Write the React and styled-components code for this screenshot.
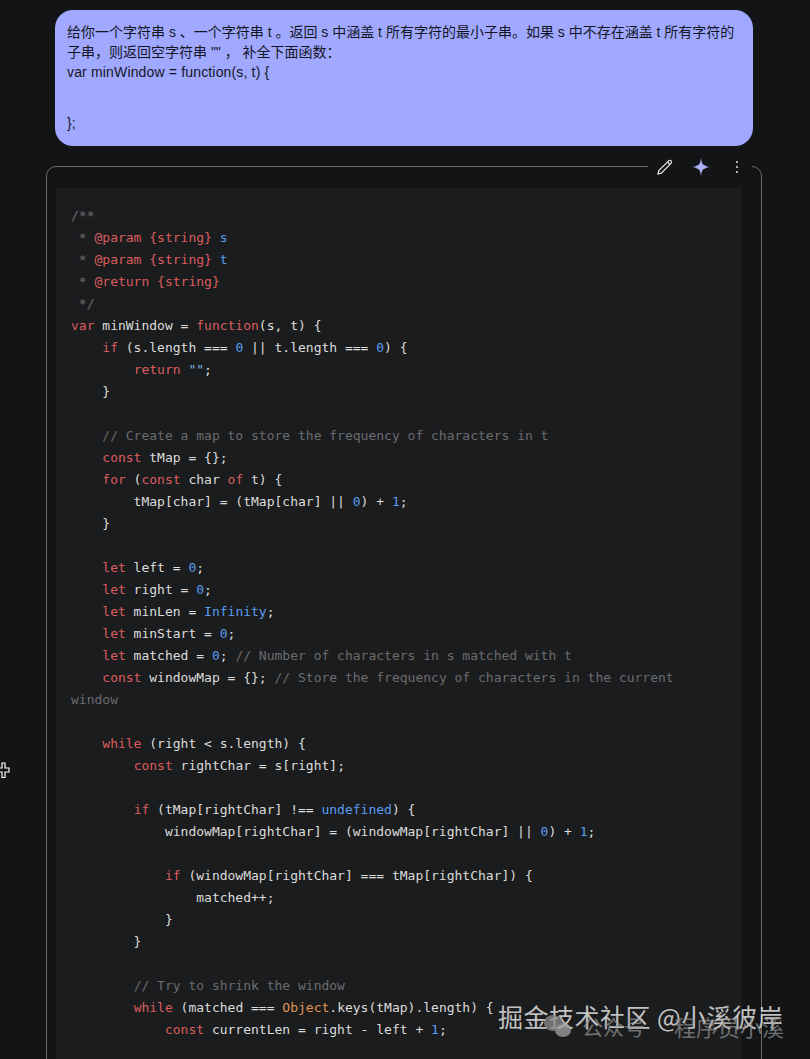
import React from 'react'
import styled, { createGlobalStyle } from 'styled-components'

const GlobalStyle = createGlobalStyle`
    html, body {
        margin: 0;
        padding: 0;
        background: #131416;
    }
`

const Page = styled.div`
    position: relative;
    width: 810px;
    height: 1059px;
    overflow: hidden;
    background: #131416;
    padding: 10px 48px 0 46px;
    box-sizing: border-box;
`
const Bubble = styled.div`
    margin-left: 9px;
    margin-right: 9px;
    height: 136px;
    box-sizing: border-box;
    padding: 12px 12px 0;
    background: #a0a8ff;
    border-radius: 18px;
    color: #14161f;
    font-family: "Liberation Sans", "Noto Sans CJK SC", sans-serif;
    font-size: 14px;
    line-height: 20px;
`
const BubbleCode = styled.div`
    letter-spacing: 0.16px;
`
const BubbleGap = styled.div`
    height: 31px;
`
const Card = styled.div`
    position: relative;
    margin-top: 20px;
    height: 940px;
    box-sizing: border-box;
    padding: 21px 19px 0 9px;
    border: 1px solid #66686a;
    border-radius: 10px;
`
const Toolbar = styled.div`
    position: absolute;
    top: -12px;
    right: 9px;
    width: 104px;
    height: 24px;
    display: flex;
    align-items: center;
    padding-left: 9px;
    box-sizing: border-box;
    background: #131416;
`
const ToolIcon = styled.svg`
    display: block;
    flex: none;
    margin-right: ${props => props.$gap}px;
`
const CodeBlock = styled.pre`
    margin: 0;
    height: 100%;
    box-sizing: border-box;
    padding: 17px 15px 0;
    background: #1b1c1e;
    color: #dcdcdc;
    font-family: "DejaVu Sans Mono", monospace;
    font-size: 13px;
    line-height: 22px;
`
const Line = styled.div`
    height: 22px;
    white-space: pre;
`
const colors = {
    comment: '#6a6c70',
    keyword: '#dc5d5e',
    value: '#5a9df0',
    string: '#7fb5e6',
    builtin: '#e0954f',
}
const Token = styled.span`
    color: ${props => colors[props.$kind]};
`
const Watermark = styled.div`
    position: absolute;
    left: 498px;
    top: 998px;
    display: flex;
    flex-direction: column;
    font-family: "Noto Sans CJK SC", sans-serif;
    white-space: nowrap;
`
const Brand = styled.div`
    height: 36px;
    font-size: 25px;
    line-height: 36px;
    letter-spacing: 0.5px;
    color: rgba(225, 225, 225, 0.85);
`
const Account = styled.div`
    display: flex;
    align-items: center;
    height: 28px;
    margin-top: -22px;
    padding-left: 45px;
    font-size: 21px;
    line-height: 28px;
    color: rgba(150, 150, 150, 0.7);
`
const AccountName = styled.span`
    margin-left: 29px;
    font-size: 22px;
`
const WechatIcon = styled.svg`
    flex: none;
    margin-right: 9px;
`
const Cursor = styled.svg`
    position: absolute;
    left: 0;
    top: 762px;
`

const code = [
    '/**',
    ' * @param {string} s',
    ' * @param {string} t',
    ' * @return {string}',
    ' */',
    'var minWindow = function(s, t) {',
    '    if (s.length === 0 || t.length === 0) {',
    '        return "";',
    '    }',
    '',
    '    // Create a map to store the frequency of characters in t',
    '    const tMap = {};',
    '    for (const char of t) {',
    '        tMap[char] = (tMap[char] || 0) + 1;',
    '    }',
    '',
    '    let left = 0;',
    '    let right = 0;',
    '    let minLen = Infinity;',
    '    let minStart = 0;',
    '    let matched = 0; // Number of characters in s matched with t',
    '    const windowMap = {}; // Store the frequency of characters in the current',
    'window',
    '',
    '    while (right < s.length) {',
    '        const rightChar = s[right];',
    '',
    '        if (tMap[rightChar] !== undefined) {',
    '            windowMap[rightChar] = (windowMap[rightChar] || 0) + 1;',
    '',
    '            if (windowMap[rightChar] === tMap[rightChar]) {',
    '                matched++;',
    '            }',
    '        }',
    '',
    '        // Try to shrink the window',
    '        while (matched === Object.keys(tMap).length) {',
    '            const currentLen = right - left + 1;',
]

const pattern = /\b(?:var|function|if|return|const|for|of|let|while)\b|\bObject\b|""|\b\d+\b|\b(?:Infinity|undefined)\b/g

const kindOf = (word) => {
    if (word === '""') return 'string'
    if (word === 'Object') return 'builtin'
    if (/^\d|Infinity|undefined/.test(word)) return 'value'
    return 'keyword'
}

// splits one line of code into coloured tokens
const highlight = (line, index) => {
    if (line === 'window') return <Token $kind="comment">{line}</Token>
    if (index < 5) {
        const doc = line.match(/^( \* )(@\w+ \{string\})( \w)?$/)
        if (!doc) return <Token $kind="comment">{line}</Token>
        return (
            <>
                <Token $kind="comment">{doc[1]}</Token>
                <Token $kind="keyword">{doc[2]}</Token>
                <Token $kind="value">{doc[3]}</Token>
            </>
        )
    }
    const slash = line.indexOf('//')
    const body = slash >= 0 ? line.slice(0, slash) : line
    const parts = []
    let last = 0
    for (const match of body.matchAll(pattern)) {
        parts.push(body.slice(last, match.index))
        parts.push(<Token key={match.index} $kind={kindOf(match[0])}>{match[0]}</Token>)
        last = match.index + match[0].length
    }
    parts.push(body.slice(last))
    if (slash >= 0) parts.push(<Token key="comment" $kind="comment">{line.slice(slash)}</Token>)
    return parts
}

const App = () => {
    return (
        <Page>
            <GlobalStyle />
            <Bubble>
                <div>给你一个字符串 s 、一个字符串 t 。返回 s 中涵盖 t 所有字符的最小子串。如果 s 中不存在涵盖 t 所有字符的</div>
                <div>子串，则返回空字符串 "" ， 补全下面函数：</div>
                <BubbleCode>var minWindow = function(s, t) {'{'}</BubbleCode>
                <BubbleGap />
                <div>{'}'};</div>
            </Bubble>
            <Card>
                <Toolbar>
                    <ToolIcon $gap={19} width="16" height="16" viewBox="0 0 16 16" fill="none" stroke="#e8e8e8" strokeWidth="1.2">
                        <path d="M1 15 L1.8 11.6 L11.8 1.6 Q12.9 0.8 14 1.8 Q15 3 14.2 4.1 L4.3 14.1 Z" />
                        <path d="M10.4 3 L12.9 5.5" />
                    </ToolIcon>
                    <ToolIcon $gap={25} width="18" height="18" viewBox="0 0 18 18">
                        <path d="M9 0 C9.5 4.6 10.6 6.6 12 7 C13.4 7.8 15 8.6 18 9 C15 9.4 13.4 10.2 12 11 C10.6 11.4 9.5 13.4 9 18 C8.5 13.4 7.4 11.4 6 11 C4.6 10.2 3 9.4 0 9 C3 8.6 4.6 7.8 6 7 C7.4 6.6 8.5 4.6 9 0 Z" fill="#aab0f5" />
                    </ToolIcon>
                    <ToolIcon $gap={0} width="4" height="14" viewBox="0 0 4 14" fill="#e0e0e0">
                        <circle cx="2" cy="2" r="1" />
                        <circle cx="2" cy="7" r="1" />
                        <circle cx="2" cy="12" r="1" />
                    </ToolIcon>
                </Toolbar>
                <CodeBlock>
                    {code.map((line, index) => (
                        <Line key={index}>{highlight(line, index)}</Line>
                    ))}
                </CodeBlock>
            </Card>
            <Cursor width="10" height="17" viewBox="0 0 10 17">
                <path d="M2 1 H5 V6 H9 V10 H5 V15.5 H2 V10 H-1 V6 H2 Z" fill="#111" stroke="#fff" strokeWidth="1.2" />
            </Cursor>
            <Watermark>
                <Brand>掘金技术社区 @小溪彼岸</Brand>
                <Account>
                    <WechatIcon width="30" height="24" viewBox="0 0 30 24" fill="#8d8d8d" opacity="0.75">
                        <ellipse cx="10" cy="9" rx="9" ry="8" />
                        <ellipse cx="20" cy="16" rx="8" ry="7" fill="#a5a5a5" />
                    </WechatIcon>
                    公众号
                    <AccountName>程序员小溪</AccountName>
                </Account>
            </Watermark>
        </Page>
    )
}

export default App
